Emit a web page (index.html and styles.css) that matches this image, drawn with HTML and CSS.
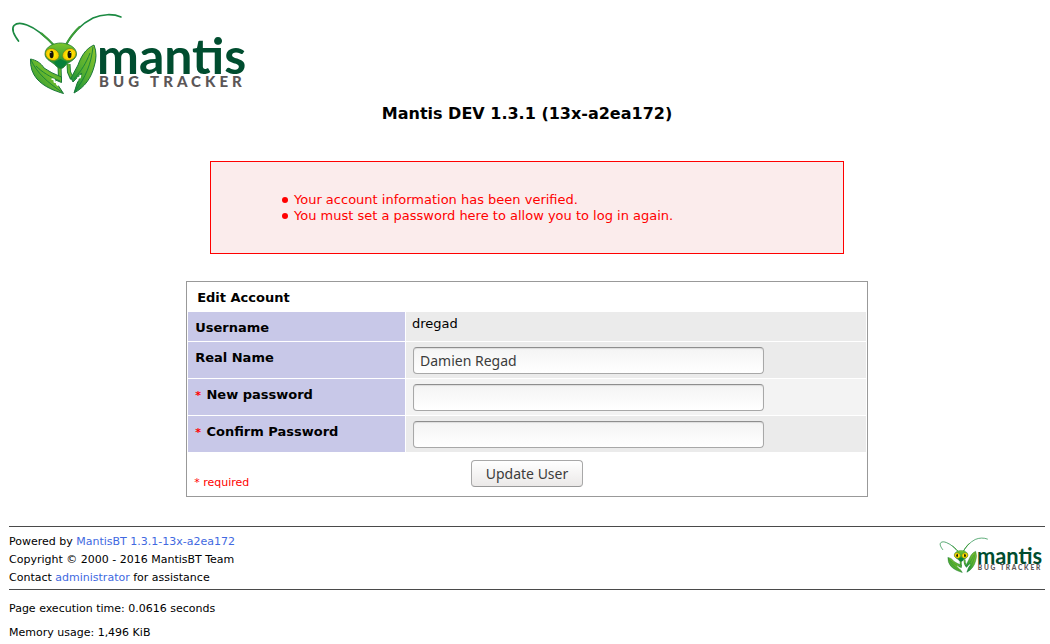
FILE: index.html
```
<!DOCTYPE html>
<html lang="en">
<head>
<meta charset="utf-8">
<title>Edit Account - MantisBT</title>
<link rel="stylesheet" href="styles.css">
</head>
<body>
<header>
  <a class="logo" href="#" aria-label="Mantis Bug Tracker">
    <svg class="logo-large" viewBox="9 10 238 87" aria-hidden="true">
      <defs>
        <linearGradient id="leaf-left" x1="0" y1="1" x2="1" y2="0">
          <stop offset="0" stop-color="#128a3c"/><stop offset=".55" stop-color="#6dba2c"/><stop offset="1" stop-color="#2f9a38"/>
        </linearGradient>
        <linearGradient id="leaf-right" x1="0" y1="1" x2="1" y2="0">
          <stop offset="0" stop-color="#0b8a3e"/><stop offset=".5" stop-color="#58b030"/><stop offset="1" stop-color="#8cc62c"/>
        </linearGradient>
        <linearGradient id="face" x1="0" y1="0" x2="0" y2="1">
          <stop offset="0" stop-color="#7cc62a"/><stop offset=".5" stop-color="#45a832"/><stop offset="1" stop-color="#067a35"/>
        </linearGradient>
        <radialGradient id="eye">
          <stop offset=".4" stop-color="#ffee00"/><stop offset="1" stop-color="#f8bc00"/>
        </radialGradient>
      </defs>
      <g id="mantis-logo">
        <path d="M18.500 41C14 35 11 29 14 25.500C17 22.500 22 23 27 25C38 29 48 39 55.500 47" fill="none" stroke="#1c8a42" stroke-width="1.700" stroke-linecap="round"/>
        <path d="M41 33C47 38 52 43 55.500 47" fill="none" stroke="#3c9c38" stroke-width="2.200"/>
        <path d="M65 46.500C71 35 81 24 93 18C102 14 113 13.500 121 17" fill="none" stroke="#1c8a42" stroke-width="1.600" stroke-linecap="round"/>
        <path d="M65 46.500C69 39 74 32 80 26.500" fill="none" stroke="#3c9c38" stroke-width="2.200"/>
        <path d="M59.500 65L60 80M68.500 64L69 72L72 79" fill="none" stroke="#1d7d36" stroke-width="4"/>
        <path d="M59.500 65L60 79M68.500 64L69 72L72 78" fill="none" stroke="#63b52f" stroke-width="2.200"/>
        <path d="M30.500 59C36 60 41 63 44 68Q51 73 61.500 77L61.500 82.500L53 79Q59 86 63.500 93.500C55 91 44 87 37 79Q30 71 30.500 59Z" fill="url(#leaf-left)" stroke="#19763a"/>
        <path d="M31 60C37 73 47 82 62.500 92.500M36 66C42 72 50 77 60 81" fill="none" stroke="#14803a" stroke-width=".9"/>
        <path d="M51.500 79l2.500 .5 .5 2.500 2 .5 .5 2 1.500 1" fill="none" stroke="#fff" stroke-width="1.600"/>
        <path d="M94 45C85 49 81 57 78 65L71 78L73 82L81.500 73Q76 85 74 93C85 87 91 78 94 67Q98 55 94 45Z" fill="url(#leaf-right)" stroke="#19763a"/>
        <path d="M93 47C91 64 86 77 74.500 92M90 53C86 63 82 70 74 79" fill="none" stroke="#14803a" stroke-width=".9"/>
        <path d="M80.500 75l-.5 2.500-2 .5-.5 2.500-1.500 .5" fill="none" stroke="#fff" stroke-width="1.600"/>
        <path d="M60.500 43C66 43 76.500 46 76.500 54C76.500 60 68 62 65 66Q61 71 56 66C53 62 45 60 45 54C45 46 55 43 60.500 43Z" fill="url(#face)" stroke="#267c31" stroke-width=".8"/>
        <path d="M60.500 59L67 62Q61 72 54 62Z" fill="#07803a"/>
        <ellipse cx="52.300" cy="54.500" rx="7" ry="5.800" transform="rotate(28 52.300 54.500)" fill="url(#eye)" stroke="#5d8a18" stroke-width=".6"/>
        <ellipse cx="69.300" cy="54.500" rx="7" ry="5.800" transform="rotate(-28 69.300 54.500)" fill="url(#eye)" stroke="#5d8a18" stroke-width=".6"/>
        <ellipse cx="51.600" cy="54.500" rx="2" ry="3.800" fill="#171407"/>
        <ellipse cx="69.500" cy="54.500" rx="2" ry="3.800" fill="#171407"/>
        <circle cx="50.800" cy="52.500" r=".6" fill="#fff"/><circle cx="70.300" cy="52.500" r=".6" fill="#fff"/>
        <text class="logo-name" x="97" y="74">mantis</text>
        <text class="logo-tag" x="99" y="87">BUG TRACKER</text>
      </g>
    </svg>
  </a>
  <h1>Mantis DEV 1.3.1 (13x-a2ea172)</h1>
</header>

<main>
  <section class="notice">
    <ul>
      <li>Your account information has been verified.</li>
      <li>You must set a password here to allow you to log in again.</li>
    </ul>
  </section>

  <form class="account">
    <h2>Edit Account</h2>
    <div class="row">
      <span class="label">Username</span>
      <span class="value">dregad</span>
    </div>
    <div class="row">
      <label class="label" for="realname">Real Name</label>
      <span class="field"><input id="realname" type="text" value="Damien Regad"></span>
    </div>
    <div class="row light">
      <label class="label" for="password"><span class="star">*</span> New password</label>
      <span class="field"><input id="password" type="password"></span>
    </div>
    <div class="row">
      <label class="label" for="confirm"><span class="star">*</span> Confirm Password</label>
      <span class="field"><input id="confirm" type="password"></span>
    </div>
    <div class="actions">
      <span class="required">* required</span>
      <button type="button">Update User</button>
    </div>
  </form>
</main>

<footer>
  <div class="about">
    <address>
      <span>Powered by <a href="#">MantisBT 1.3.1-13x-a2ea172</a></span>
      <span>Copyright © 2000 - 2016 MantisBT Team</span>
      <span>Contact <a href="#">administrator</a> for assistance</span>
    </address>
    <a class="logo" href="#" aria-label="Mantis Bug Tracker">
      <svg class="logo-small" viewBox="9 10 238 87" aria-hidden="true"><use href="#mantis-logo"/></svg>
    </a>
  </div>
  <p>Page execution time: 0.0616 seconds</p>
  <p>Memory usage: 1,496 KiB</p>
</footer>
</body>
</html>
```
FILE: styles.css
```
* { box-sizing: border-box; }
body {
  margin: 0;
  padding: 10px 5px 0 9px;
  background: #fff;
  color: #000;
  font: 13px/16px "DejaVu Sans", Verdana, sans-serif;
}
a { color: #4169e1; text-decoration: none; }
.logo { display: block; }
.logo svg { display: block; }
.logo-large { width: 238px; height: 87px; }
.logo-small { width: 105px; height: 38px; }
.logo-name { font: 700 50px Lato, sans-serif; fill: #004d2f; }
.logo-tag { font: 900 15px Lato, sans-serif; letter-spacing: 4px; fill: #5b5657; }

h1 {
  margin: 7px 0 0;
  font-size: 16px;
  line-height: 20px;
  text-align: center;
}
.notice {
  width: 61.2%;
  margin: 37px auto 27px;
  padding: 30px 70px 29px;
  border: 1px solid #f00;
  background: #fbecec;
  color: #f00;
}
.notice ul { margin: 0; padding: 0; list-style: none; }
.notice li { display: flex; align-items: center; gap: 6px; padding-left: 1px; }
.notice li::before {
  content: "";
  flex: none;
  width: 6px;
  height: 6px;
  border-radius: 50%;
  background: #f00;
}

.account {
  width: 65.8%;
  margin: 0 auto;
  padding: 1px;
  border: 1px solid #999;
}
h2 {
  margin: 0;
  padding: 7px 9px;
  font-size: 13px;
  line-height: 15px;
}
.row {
  display: grid;
  grid-template-columns: 32% 1fr;
  column-gap: 1px;
  min-height: 29px;
  line-height: 16px;
}
.row + .row { margin-top: 1px; }
.label {
  padding: 8px 7px 5px;
  background: #c8c8e8;
  font-weight: 700;
}
.value { padding: 4px 6px; background: #ebebeb; }
.field { padding: 5px 7px 4px; background: #ebebeb; }
.light .field { background: #f3f3f3; }
.star { margin-right: 1px; color: #f00; font-size: 11px; }
input, button {
  display: block;
  height: 27px;
  border: 1px solid #a8a8a8;
  border-radius: 4px;
  color: #3c3c3c;
  font: 14px "Noto Sans", sans-serif;
}
input {
  width: 351px;
  max-width: 100%;
  padding: 0 6px;
  border-top-color: #8e8e8e;
  background: linear-gradient(#f4f4f4, #fff);
  box-shadow: inset 0 1px 1px #ddd;
}
button {
  padding: 0 14px;
  border-bottom-color: #999;
  background: linear-gradient(#fff, #ebe9e8);
}
.actions {
  display: grid;
  grid-template-columns: 1fr auto 1fr;
  padding: 8px 6px;
}
.required {
  align-self: end;
  color: #f00;
  font-size: 11px;
  line-height: 9px;
}

footer { margin-top: 29px; font-size: 11px; line-height: 18px; }
.about {
  display: flex;
  justify-content: space-between;
  align-items: flex-start;
  padding: 6px 2px 2px 0;
  border: solid #4a4a4a;
  border-width: 1px 0;
}
.about .logo { margin-top: 3px; }
address { display: grid; font-style: normal; }
footer p { margin: 10px 0 6px; }
footer p + p { margin: 0; }
```
